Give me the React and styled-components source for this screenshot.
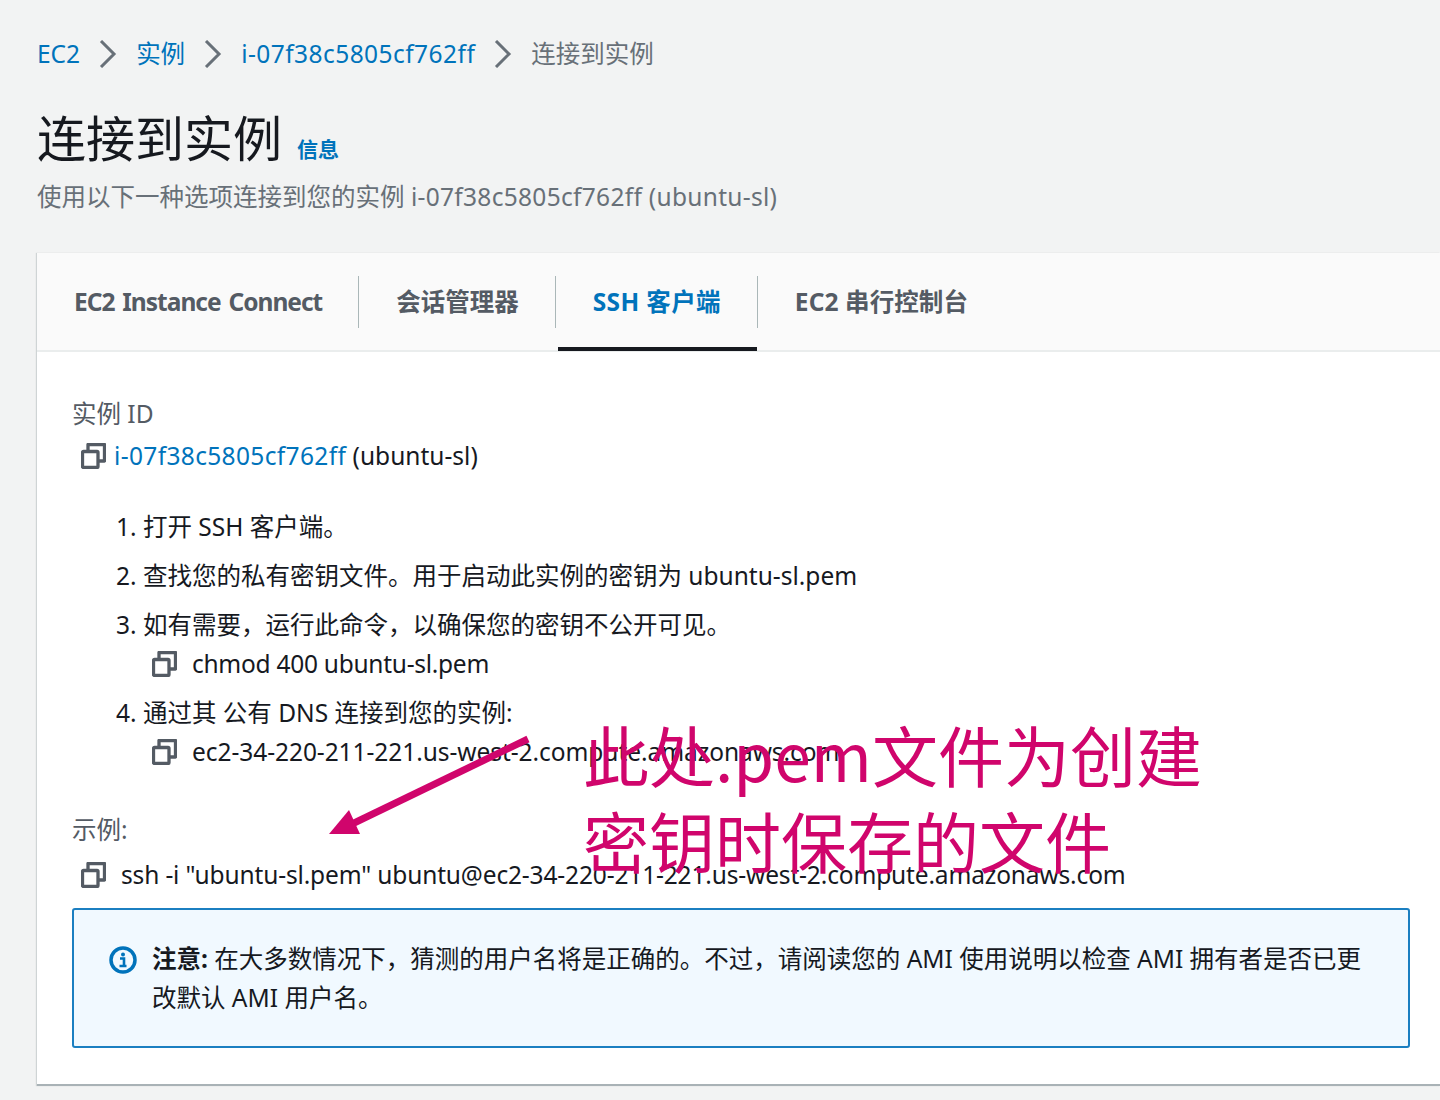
import React from "react";
import styled, { createGlobalStyle } from "styled-components";

const Global = createGlobalStyle`
  html, body { margin: 0; padding: 0; background: #f2f3f3; }
  body { font-family: "Noto Sans", "Noto Sans CJK SC", sans-serif; overflow: hidden; }
  #root { height: 1100px; overflow: hidden; }
`;

const Page = styled.div`
  position: relative;
  height: 1100px;
  padding: 36px 0 0 37px;
  box-sizing: border-box;
  font-size: 24.5px;
  line-height: 39px;
  color: #16191f;
`;
const Crumbs = styled.nav`
  display: flex;
  align-items: center;
  height: 35px;
  font-size: 24.5px;
`;
const Crumb = styled.span`
  color: ${(p) => (p.$current ? "#687078" : "#0073bb")};
  letter-spacing: ${(p) => p.$ls || 0}px;
`;
const Chevron = styled.svg`
  width: 20px;
  height: 28px;
  margin: 0 18px 0 18px;
  flex: none;
`;
const TitleRow = styled.div`
  display: flex;
  align-items: baseline;
  gap: 15px;
  margin-top: 37px;
  height: 60px;
`;
const Title = styled.h1`
  margin: 0;
  font-size: 49px;
  line-height: 60px;
  font-weight: 400;
  color: #16191f;
`;
const Info = styled.a`
  font-size: 21px;
  font-weight: 700;
  color: #0073bb;
  line-height: 30px;
`;
const Subtitle = styled.p`
  margin: 9px 0 0;
  color: #687078;
  font-size: 24.5px;
  line-height: 39px;
`;
const IdText = styled.span`
  letter-spacing: 0.3px;
`;
const Card = styled.section`
  margin-top: 37px;
  background: #fff;
  border-bottom: 2px solid #a9b2b6;
  box-shadow: -1px 0 1px rgba(0, 28, 36, 0.14);
  padding-bottom: 36px;
`;
const TabBar = styled.div`
  display: flex;
  align-items: center;
  height: 97px;
  background: #fafafa;
  border-bottom: 2px solid #eaeded;
`;
const Tab = styled.div`
  position: relative;
  display: flex;
  align-items: center;
  height: 52px;
  padding: 0 36px 0 37px;
  font-weight: 700;
  font-size: 24.5px;
  letter-spacing: ${(p) => p.$ls || 0}px;
  word-spacing: ${(p) => p.$ws || 0}px;
  color: ${(p) => (p.$active ? "#0073bb" : "#545b64")};
  border-right: ${(p) => (p.$last ? "none" : "1.5px solid #aab7b8")};
  &::after {
    content: "";
    display: ${(p) => (p.$active ? "block" : "none")};
    position: absolute;
    left: 2px;
    right: 0;
    bottom: -23px;
    height: 4px;
    background: #16191f;
  }
`;
const Body = styled.div`
  padding: 42px 30px 0 35px;
`;
const Label = styled.div`
  color: #545b64;
  margin-top: ${(p) => p.$mt || 0}px;
`;
const CopyRow = styled.div`
  display: flex;
  align-items: center;
  gap: ${(p) => p.$gap}px;
  margin-left: ${(p) => p.$ml}px;
  margin-top: ${(p) => p.$mt || 0}px;
  white-space: nowrap;
`;
const Command = styled.span`
  letter-spacing: ${(p) => p.$ls || 0}px;
`;
const Link = styled.a`
  color: #0073bb;
  letter-spacing: 0.35px;
`;
const Steps = styled.ol`
  margin: 32px 0 0;
  padding: 0 0 0 71px;
`;
const Step = styled.li`
  margin-bottom: 10px;
`;
const IconSvg = styled.svg`
  width: 25px;
  height: 26px;
  flex: none;
  display: block;
`;
const Notice = styled.div`
  display: flex;
  gap: 15px;
  margin-top: 14px;
  height: 140px;
  box-sizing: border-box;
  padding: 29px 36px 0 35px;
  background: #f1f9ff;
  border: 2px solid #1b7fc1;
  border-radius: 3px;
`;
const NoticeIcon = styled.svg`
  width: 28px;
  height: 28px;
  flex: none;
  margin-top: 7px;
`;
const NoticeText = styled.div`
  flex: 1;
`;
const Strong = styled.strong`
  font-weight: 700;
`;
const Annotation = styled.div`
  position: absolute;
  left: 583px;
  top: 710px;
  font-size: 66px;
  line-height: 86px;
  font-weight: 400;
  color: #d0056c;
  white-space: nowrap;
  font-family: "Noto Sans CJK SC", "Noto Sans", sans-serif;
`;
const Arrow = styled.svg`
  position: absolute;
  left: 320px;
  top: 730px;
  width: 220px;
  height: 115px;
`;

const ChevronIcon = () => (
  <Chevron viewBox="0 0 20 28" fill="none">
    <path d="M3 1 L16 14 L3 27" stroke="#687078" strokeWidth="3" />
  </Chevron>
);
const Copy = () => (
  <IconSvg viewBox="0 0 25 26" fill="none" stroke="#545b64" strokeWidth="3.3" strokeLinejoin="round">
    <rect x="1.5" y="8.5" width="15.5" height="16" rx="1" />
    <path d="M7 7 V1.5 H23.5 V18 H18" />
  </IconSvg>
);

export default function App() {
  return (
    <Page>
      <Global />
      <Crumbs>
        <Crumb>EC2</Crumb>
        <ChevronIcon />
        <Crumb>实例</Crumb>
        <ChevronIcon />
        <Crumb $ls={0.45}>i-07f38c5805cf762ff</Crumb>
        <ChevronIcon />
        <Crumb $current>连接到实例</Crumb>
      </Crumbs>
      <TitleRow>
        <Title>连接到实例</Title>
        <Info>信息</Info>
      </TitleRow>
      <Subtitle>
        使用以下一种选项连接到您的实例 <IdText>i-07f38c5805cf762ff (ubuntu-sl)</IdText>
      </Subtitle>
      <Card>
        <TabBar>
          <Tab $ls={-1} $ws={2.5}>EC2 Instance Connect</Tab>
          <Tab>会话管理器</Tab>
          <Tab $active $ls={0.35}>SSH 客户端</Tab>
          <Tab $last $ls={0.1}>EC2 串行控制台</Tab>
        </TabBar>
        <Body>
          <Label>实例 ID</Label>
          <CopyRow $gap={8} $ml={9} $mt={3}>
            <Copy />
            <span>
              <Link>i-07f38c5805cf762ff</Link> (ubuntu-sl)
            </span>
          </CopyRow>
          <Steps>
            <Step>打开 SSH 客户端。</Step>
            <Step>查找您的私有密钥文件。用于启动此实例的密钥为 ubuntu-sl.pem</Step>
            <Step>
              如有需要，运行此命令，以确保您的密钥不公开可见。
              <CopyRow $gap={15} $ml={9}>
                <Copy />
                <Command $ls={-0.27}>chmod 400 ubuntu-sl.pem</Command>
              </CopyRow>
            </Step>
            <Step>
              通过其 公有 DNS 连接到您的实例:
              <CopyRow $gap={15} $ml={9}>
                <Copy />
                <Command $ls={-0.06}>ec2-34-220-211-221.us-west-2.compute.amazonaws.com</Command>
              </CopyRow>
            </Step>
          </Steps>
          <Label $mt={39}>示例:</Label>
          <CopyRow $gap={15} $ml={9} $mt={6}>
            <Copy />
            <Command $ls={-0.15}>ssh -i "ubuntu-sl.pem" ubuntu@ec2-34-220-211-221.us-west-2.compute.amazonaws.com</Command>
          </CopyRow>
          <Notice>
            <NoticeIcon viewBox="0 0 28 28" fill="none">
              <circle cx="14" cy="14" r="12" stroke="#0073bb" strokeWidth="3.5" />
              <circle cx="14" cy="8.5" r="2" fill="#0073bb" />
              <path d="M11 12.5 H15 V19.5 M10.5 20 H17.5" stroke="#0073bb" strokeWidth="2.6" />
            </NoticeIcon>
            <NoticeText>
              <Strong>注意:</Strong> 在大多数情况下，猜测的用户名将是正确的。不过，请阅读您的 AMI 使用说明以检查 AMI 拥有者是否已更改默认 AMI 用户名。
            </NoticeText>
          </Notice>
        </Body>
      </Card>
      <Annotation>
        此处.pem文件为创建
        <br />
        密钥时保存的文件
      </Annotation>
      <Arrow viewBox="0 0 220 115" fill="none">
        <path d="M208 9 L32 94" stroke="#d0056c" strokeWidth="7" />
        <path d="M9 104 L29 80 L40 104 Z" fill="#d0056c" />
      </Arrow>
    </Page>
  );
}
